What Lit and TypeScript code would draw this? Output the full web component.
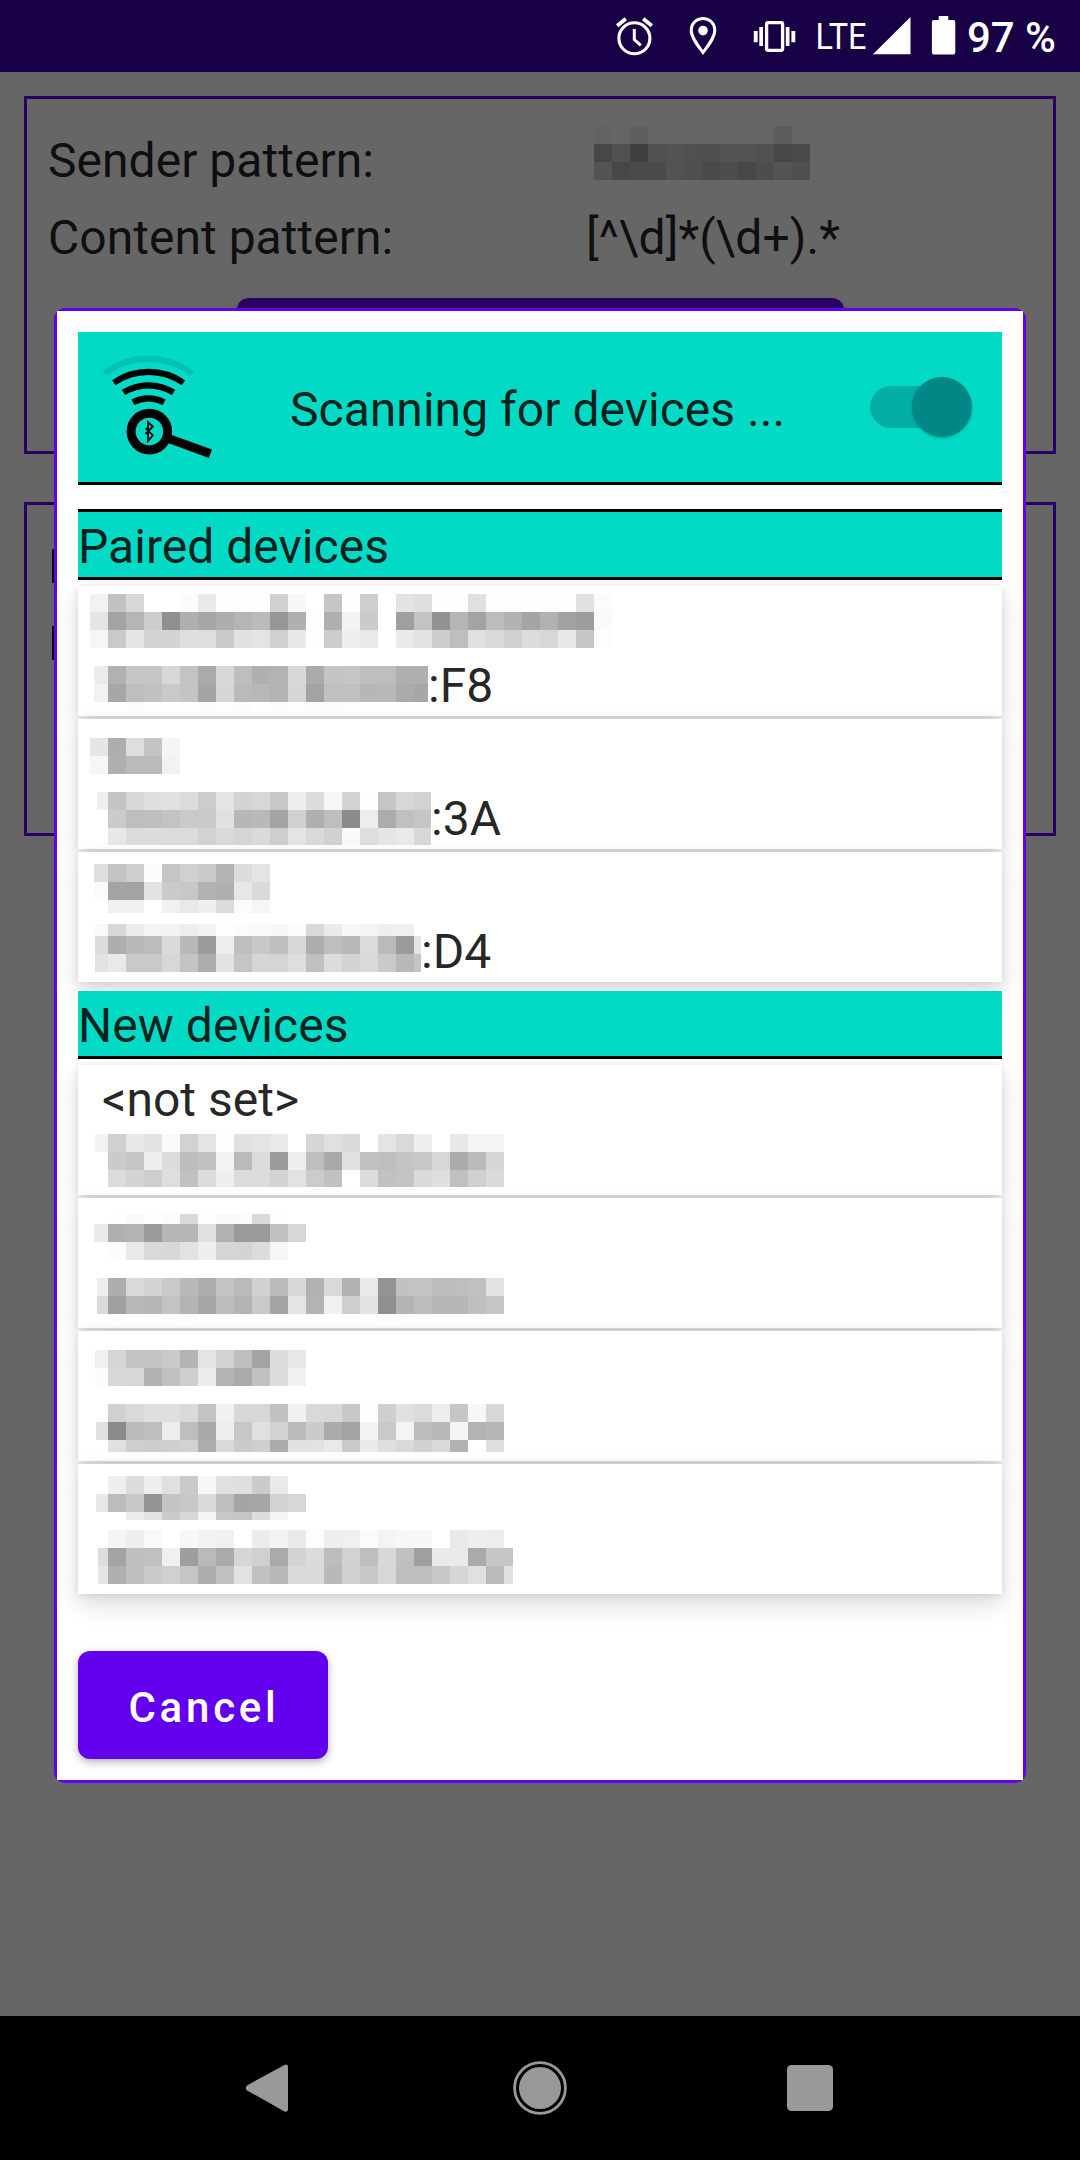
import { LitElement, html, svg, css, nothing } from "lit";
import { customElement, property } from "lit/decorators.js";

interface MosaicRow {
  y: number;
  h: number;
  cells: string;
}

interface Mosaic {
  left: number;
  first: number;
  right: number;
  rows: MosaicRow[];
}

interface Line {
  text?: string;
  mosaic?: Mosaic;
}

const CELL = 18;

/* Rows are given relative to the top of the text line, columns relative to the card. */
const mosaic = (left: number, right: number, rows: [number, number, string][], first = 30): Mosaic => ({
  left,
  first,
  right,
  rows: rows.map(([y, h, cells]) => ({ y, h, cells })),
});

const SENDER = mosaic(0, 216, [
  [0, 18, "63 65 5f 64 -- -- -- -- -- -- 5d --"],
  [18, 18, "47 50 40 50 53 50 4e 52 53 50 47 4a"],
  [36, 18, "54 47 4a 4a 52 4f 49 4d 47 4d 54 4f"],
], 18);

const PAIRED: Line[][] = [
  [
    {
      mosaic: mosaic(12, 534, [
        [8, 18, "f2 c2 d8 -- -- fc ea fe fe fe d0 f8 -- c6 fe ce -- e3 df fd fe e0 fd fd fe fd fd e1 fb"],
        [26, 18, "e5 a4 b5 cd 8f b0 a7 ae b5 bb 96 b0 fe b0 f3 cb -- 9f c3 92 b5 a3 bc b2 a5 b2 a2 9e fa"],
        [44, 18, "f6 c9 e6 d4 d4 de de cb e1 e4 d0 e8 fe cc ef e9 -- ea e3 cd be e1 da d0 dc d7 e8 c6 fd"],
      ]),
    },
    {
      mosaic: mosaic(16, 350, [
        [15, 18, "ec b1 c6 c6 d7 c3 aa d8 be b0 b3 d8 ab c4 c6 be be b0 b0"],
        [33, 18, "f2 a7 be c1 c9 c4 a5 d6 ba b8 b3 d6 a3 c0 c0 b7 b9 ab a7"],
        [51, 8, "-- -- fc -- -- -- fc -- fc -- fc -- fc fc"],
      ]),
      text: ":F8",
    },
  ],
  [
    {
      mosaic: mosaic(12, 102, [
        [19, 18, "e6 ae de c4 f5"],
        [37, 18, "f6 b0 ba ba f2"],
      ]),
    },
    {
      mosaic: mosaic(19, 353, [
        [8, 18, "ef c4 d7 df e1 db cc e4 d4 d7 c7 ef dd f7 d4 fe c6 d8 d2"],
        [26, 18, "-- cb be bf c3 ca cb e1 b7 b9 a3 d0 b0 be 8b ed ac c0 c6"],
        [44, 17, "-- e8 dd dd dc db d3 da d5 da ce e4 d9 d1 fa de e6 ea d8"],
      ]),
      text: ":3A",
    },
  ],
  [
    {
      mosaic: mosaic(16, 192, [
        [12, 18, "de c3 ce fc c5 d0 ca b3 dc e4"],
        [30, 18, "fb a4 a3 e3 ca c7 b2 b0 e7 da"],
        [48, 13, "-- f1 f0 -- f1 e9 ef dc fb f6"],
      ]),
    },
    {
      mosaic: mosaic(17, 343, [
        [7, 12, "f9 d7 eb f4 f3 ee f3 fe fb fa f8 fb d9 ea f7 f4 ef f0"],
        [19, 18, "dc ae b8 bc da b9 9c ef bf c8 bf d7 ad be b9 db ba 9b e4"],
        [37, 18, "e2 e9 c9 c9 d7 c4 ae e3 c5 d6 d5 de c0 dc d3 d9 ca b8 c5"],
      ]),
      text: ":D4",
    },
  ],
];

const FOUND: Line[][] = [
  [
    { text: "<not set>" },
    {
      mosaic: mosaic(17, 426, [
        [4, 18, "f2 d0 e8 e3 fa d2 e4 fe e1 e4 e9 -- d6 e0 da -- e4 d9 ef -- e8 f4 f4"],
        [22, 18, "-- cb c6 ee dc bd c1 f2 ba dc 9b ef be a9 e1 c1 be c4 c7 d7 ab bb d6"],
        [40, 17, "-- dc d4 ce de c1 dc ef db db d3 e2 cc c1 -- dc c1 c4 da df c0 d0 da"],
      ]),
    },
  ],
  [
    {
      mosaic: mosaic(16, 228, [
        [16, 10, "-- fe fa fe fb da fe f9 fb da fd"],
        [26, 18, "ea b0 b3 9a b7 b6 e0 b1 9a 9b c2 d7"],
        [44, 18, "-- fc e9 d9 d8 e2 ef d6 d4 dc f6"],
      ]),
    },
    {
      mosaic: mosaic(19, 426, [
        [15, 18, "ee ae da d3 c9 b9 ae c4 ba d1 bb d8 b2 d9 b2 e9 94 c2 c4 bc be c0 e3"],
        [33, 18, "db a0 b8 b7 c3 b4 a6 bc b3 c9 a5 e4 b3 f1 ce e3 90 b4 bc b5 b7 bf c5"],
        [51, 7, "-- fc -- -- fd fc -- fd fd -- -- fd -- -- -- fd fc fd fd -- -- fd"],
      ]),
    },
  ],
  [
    {
      mosaic: mosaic(17, 228, [
        [19, 18, "f0 d5 c4 c4 ca b4 e5 d2 be a4 dd e7"],
        [37, 18, "fb d8 d7 b1 c1 ce ec b3 aa c0 dd f1"],
      ]),
    },
    {
      mosaic: mosaic(18, 426, [
        [8, 18, "-- d1 d9 df df da c4 f1 d7 d7 c2 f1 d9 d8 c8 fe cf e1 db ed c6 f7 d7"],
        [26, 18, "e1 8b ba be ed be a9 ee c7 e0 d4 bb cb ab a3 f2 c9 f4 bd b9 f5 b3 b7"],
        [44, 12, "-- e0 ce cd cf d2 ae d9 cb cf ab e1 e2 e9 ca ea df d9 d1 da b2 -- df"],
      ]),
    },
  ],
  [
    {
      mosaic: mosaic(18, 228, [
        [12, 18, "-- ef dc ee e0 ca f7 e1 df cb ea"],
        [30, 18, "e8 bc c8 94 c4 c8 da be a5 a6 d2 d7"],
        [48, 8, "-- -- eb e2 ca d7 f5 c7 c5 dd f5"],
      ]),
    },
    {
      mosaic: mosaic(20, 435, [
        [1, 18, "-- f5 ee f9 -- f8 f3 f1 -- ec f3 ea fd ef f0 fc f4 f7 f8 -- e9 ee ed"],
        [19, 18, "dd a4 bf c0 f0 9e ba aa d6 d0 aa d3 db bd d2 be d8 c0 9f ea ea aa c6 c5"],
        [37, 18, "e5 b0 bf cb d0 c5 ae c2 e2 c1 b8 d9 da b9 d1 c8 d8 be be c8 d6 e0 ba e1"],
      ]),
    },
  ],
];

@customElement("pixel-mosaic")
export class PixelMosaic extends LitElement {
  @property({ attribute: false }) data!: Mosaic;
  @property({ type: Number }) height = 65;

  static styles = css`
    :host { display: block; flex: none; }
    svg { display: block; overflow: visible; }
  `;

  render() {
    const { left, first, right, rows } = this.data;
    return html`<svg width=${right} height=${this.height} shape-rendering="crispEdges">
      ${rows.map((row) =>
        row.cells.split(" ").map((c, i) => {
          if (c === "--") return nothing;
          const x = i === 0 ? left : first + CELL * (i - 1);
          const end = Math.min(right, first + CELL * i);
          return svg`<rect x=${x} y=${row.y} width=${end - x} height=${row.h} fill=${"#" + c + c + c} />`;
        })
      )}
    </svg>`;
  }
}

@customElement("device-card")
export class DeviceCard extends LitElement {
  @property({ attribute: false }) lines: Line[] = [];

  static styles = css`
    :host {
      display: block;
      height: 130px;
      background: #fff;
      box-shadow: 0 10px 22px rgba(0, 0, 0, 0.15), 0 1px 7px rgba(0, 0, 0, 0.09);
    }
    .line { display: flex; height: 65px; }
    .text { line-height: 69px; height: 65px; white-space: pre; }
    .lead { padding-left: 24px; }
  `;

  render() {
    return this.lines.map(
      (l) => html`<div class="line">
        ${l.mosaic ? html`<pixel-mosaic .data=${l.mosaic}></pixel-mosaic>` : nothing}
        ${l.text ? html`<span class=${l.mosaic ? "text" : "text lead"}>${l.text}</span>` : nothing}
      </div>`
    );
  }
}

@customElement("app-root")
export class AppRoot extends LitElement {
  static styles = css`
    :host {
      display: flex;
      flex-direction: column;
      position: relative;
      width: 1080px;
      height: 2160px;
      overflow: hidden;
      background: #666;
      font-family: Roboto, "Liberation Sans", sans-serif;
      font-size: 48px;
      letter-spacing: 0.03px;
      color: rgba(0, 0, 0, 0.87);
    }
    * { box-sizing: border-box; }
    svg { display: block; flex: none; }

    .status { height: 72px; flex: none; background: #170045; }

    .page {
      flex: 1;
      display: flex;
      flex-direction: column;
      gap: 48px;
      padding: 24px;
    }
    .panel { border: 3px solid #290063; padding: 21px; }
    .first { height: 358px; }
    .second { height: 334px; padding: 44px 25px; }
    .pair { display: grid; grid-template-columns: 537px 1fr; height: 77px; line-height: 81px; }
    .redacted { padding: 6px 0 0 9px; }
    .value { padding-left: 1px; }
    .action {
      width: 607px;
      height: 108px;
      margin: 24px auto 0;
      border-radius: 12px;
      background: #290063;
      box-shadow: 0 3px 6px rgba(0, 0, 0, 0.3);
    }
    .stem { width: 4px; height: 34px; margin-bottom: 43px; background: #0d0d0d; }

    .nav {
      height: 144px;
      flex: none;
      background: #000;
      display: flex;
      align-items: center;
      justify-content: center;
    }

    .dialog {
      position: absolute;
      left: 54px;
      top: 308px;
      width: 972px;
      height: 1475px;
      border-radius: 11px;
      background: #6200ee;
      padding: 3px;
    }
    .sheet {
      display: flex;
      flex-direction: column;
      height: 1469px;
      padding: 21px;
      background: #fff;
      overflow: hidden;
    }
    .banner {
      height: 153px;
      flex: none;
      display: flex;
      align-items: center;
      background: #03dac6;
      border-bottom: 3px solid #000;
      margin-bottom: 24px;
    }
    .caption { flex: 1; padding-left: 72px; line-height: 56px; padding-top: 6px; white-space: pre; }
    .heading {
      position: relative;
      z-index: 1;
      flex: none;
      height: 68px;
      line-height: 70px;
      background: #03dac6;
      border-bottom: 3px solid #000;
    }
    .ruled { height: 71px; border-top: 3px solid #000; }
    .list { display: flex; flex-direction: column; gap: 3px; padding: 6px 0 9px; }

    .cancel {
      display: flex;
      align-items: center;
      justify-content: center;
      width: 250px;
      height: 108px;
      margin-top: 48px;
      border-radius: 12px;
      background: #6200ee;
      color: #fff;
      font-size: 42px;
      font-weight: 500;
      letter-spacing: 3.75px;
      padding: 4px 0 0 2px;
      box-shadow: 0 3px 8px rgba(0, 0, 0, 0.3);
    }
  `;

  private statusBar() {
    return html`<svg class="status" width="1080" height="72" viewBox="0 0 1080 72">
      <g fill="none" stroke="#fff">
        <circle cx="634.4" cy="38.3" r="15.5" stroke-width="3.1" />
        <path d="M634.3 29v10.5l6.5 5.8" stroke-width="3" />
        <path d="M617.2 25.8l8.6-7M651.8 25.8l-8.6-7" stroke-width="3.8" />
        <path d="M703 18.4c-6.4 0-11.8 5-11.8 11.7 0 7.6 6.6 15.4 11.8 22.3 5.2-6.9 11.8-14.7 11.8-22.3 0-6.7-5.4-11.7-11.8-11.7z" stroke-width="3" />
        <rect x="766.6" y="22.7" width="16" height="27.6" rx="1.5" stroke-width="3.3" />
      </g>
      <g fill="#fff">
        <circle cx="703" cy="30.6" r="4.8" />
        <path d="M753.8 31h3.9v11.3h-3.9zM759.3 27h3.7v19h-3.7zM785.8 27h3.7v19h-3.7zM791.4 31h3.9v11.3h-3.9z" />
        <path d="M873 54.3L910.5 17v37.3z" />
        <path d="M938.7 16h9.6v4h5a2 2 0 0 1 2 2v30.4a2 2 0 0 1-2 2h-19.4a2 2 0 0 1-2-2V22a2 2 0 0 1 2-2h4.8z" />
        <text x="815.6" y="48.7" font-size="37.5" letter-spacing="0" textLength="51" lengthAdjust="spacingAndGlyphs">LTE</text>
        <text x="967" y="52" font-size="42" font-weight="500" letter-spacing="0" textLength="89" lengthAdjust="spacingAndGlyphs">97 %</text>
      </g>
    </svg>`;
  }

  private scanIcon() {
    return html`<svg width="140" height="150" viewBox="78 332 140 150">
      <g fill="none" stroke="#000" stroke-width="6.2">
        <path d="M104.3 373.6a73.5 73.5 0 0 1 88 0" opacity="0.1" />
        <path d="M113.8 382.8a61 61 0 0 1 69.6 0" />
        <path d="M123.4 392.4a48 48 0 0 1 50.2 0" />
        <path d="M132.8 402.2a35.5 35.5 0 0 1 31.4 0" />
        <circle cx="149.4" cy="431.6" r="18.3" stroke-width="9" />
        <path d="M169 438.6l41.4 15.2" stroke-width="9" />
        <path d="M145.6 428.2l7.2 7-4.8 5.8v-19l4.8 4.6-7.2 7.4" stroke-width="1.8" />
      </g>
    </svg>`;
  }

  render() {
    return html`
      ${this.statusBar()}
      <main class="page">
        <section class="panel first">
          <div class="pair"><span>Sender pattern:</span>
            <pixel-mosaic class="redacted" .data=${SENDER} .height=${54}></pixel-mosaic></div>
          <div class="pair"><span>Content pattern:</span><span class="value">[^\\d]*(\\d+).*</span></div>
          <div class="action"></div>
        </section>
        <section class="panel second">
          <div class="stem"></div>
          <div class="stem"></div>
        </section>
      </main>
      <footer class="nav">
        <svg width="1080" height="144" viewBox="0 2016 1080 144" fill="#999">
          <path d="M284 2065.2L247 2085.4Q244.5 2088 247 2090.4L284 2111.2Q288 2113 288 2109V2067Q288 2063 284 2065.2z" />
          <circle cx="540" cy="2088" r="21" />
          <circle cx="540" cy="2088" r="25.4" fill="none" stroke="#999" stroke-width="2.8" />
          <rect x="787" y="2065" width="46" height="46" rx="4.5" />
        </svg>
      </footer>
      <div class="dialog">
        <div class="sheet">
          <div class="banner">
            ${this.scanIcon()}
            <span class="caption">Scanning for devices ...</span>
            <svg width="132" height="150" viewBox="870 332 132 150">
              <defs><filter id="soft" x="-20%" y="-20%" width="140%" height="140%">
                <feGaussianBlur stdDeviation="1.6" /></filter></defs>
              <rect x="870" y="386" width="92" height="42" rx="21" fill="#03aea5" />
              <circle cx="942" cy="408.4" r="30" fill="#000" opacity="0.22" filter="url(#soft)" />
              <circle cx="942" cy="407" r="30" fill="#018786" />
            </svg>
          </div>
          <div class="heading ruled">Paired devices</div>
          <div class="list">${PAIRED.map((d) => html`<device-card .lines=${d}></device-card>`)}</div>
          <div class="heading">New devices</div>
          <div class="list">${FOUND.map((d) => html`<device-card .lines=${d}></device-card>`)}</div>
          <div class="cancel">Cancel</div>
        </div>
      </div>
    `;
  }
}
